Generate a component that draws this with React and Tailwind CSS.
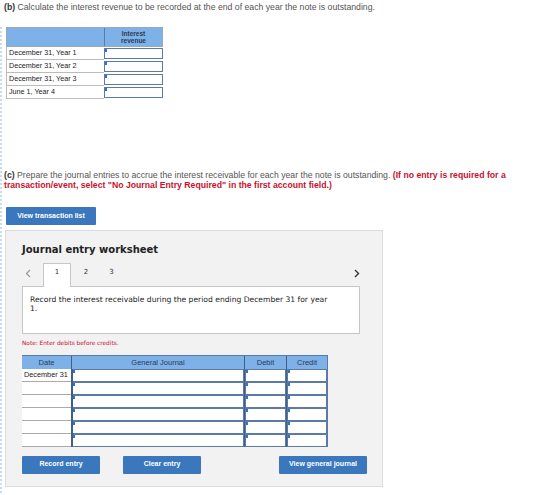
import React from 'react';

const sans = { fontFamily: '"Liberation Sans", Arial, sans-serif' };
const verdana = { fontFamily: '"DejaVu Sans", Verdana, sans-serif' };

const Cell = ({ className = '' }) => (
  <div className={`relative bg-white border border-[#5b7ba6] ${className}`}>
    <span className="absolute left-0 top-0 w-[2px] h-[3px] bg-[#2f6fd6]" />
  </div>
);

const Btn = ({ children, className = '' }) => (
  <button className={`h-[18px] bg-[#3a77bd] text-white text-[7px] font-bold rounded-[1px] ${className}`} style={sans}>
    {children}
  </button>
);

const interestRows = ['December 31, Year 1', 'December 31, Year 2', 'December 31, Year 3', 'June 1, Year 4'];

export default function App() {
  return (
    <div className="w-[560px] h-[495px] bg-white overflow-hidden" style={sans}>
      <p className="pl-[4px] pt-[3px] h-[12px] text-[8.7px] leading-[9px] text-[#555] whitespace-nowrap">
        <span className="font-bold text-[#333]">(b)</span> Calculate the interest revenue to be recorded at the end of each year the note is outstanding.
      </p>
      <div className="h-[482px] border-l-2 border-b-2 border-dotted border-[#c9dbf0] pl-[4px]">
        {/* interest table */}
        <div className="mt-[15px] w-[157px]">
          <div className="flex h-[20px] bg-[#7eb1e8] border border-[#9ab]">
            <div className="w-[97px]" />
            <div className="flex-1 border-l border-[#5b7ba6] text-center text-[6.5px] leading-[7px] text-[#2a3a55] font-bold pt-[2px]">
              Interest<br />revenue
            </div>
          </div>
          {interestRows.map((r) => (
            <div key={r} className="flex h-[13px]">
              <div className="w-[98px] border-l border-b border-[#bbb] text-[7.2px] leading-[12px] pl-[2px] text-[#222] whitespace-nowrap">{r}</div>
              <Cell className="flex-1 my-[1px]" />
            </div>
          ))}
        </div>

        {/* part c */}
        <div className="mt-[71px] -ml-[2px] text-[8.7px] leading-[10px] whitespace-nowrap">
          <div className="text-[#555]">
            <span className="font-bold text-[#333]">(c)</span> Prepare the journal entries to accrue the interest receivable for each year the note is outstanding.{' '}
            <span className="font-bold text-[#c8102e]">(If no entry is required for a</span>
          </div>
          <div className="font-bold text-[#c8102e]">transaction/event, select "No Journal Entry Required" in the first account field.)</div>
        </div>
        <Btn className="mt-[17px] w-[90px]">View transaction list</Btn>

        {/* worksheet */}
        <div className="mt-[5px] -ml-[1px] w-[378px] h-[257px] bg-[#f2f2f2] border border-[#dcdcdc] pl-[16px] pr-[22px]">
          <h2 className="mt-[12px] text-[10px] leading-[13px] font-bold text-[#222]" style={verdana}>Journal entry worksheet</h2>
          <div className="mt-[6px] flex items-end h-[24px] text-[7px] text-[#333]" style={verdana}>
            <span className="w-[21px] pl-[3px] pb-[8px]">
              <svg width="6" height="9" viewBox="0 0 6 9"><path d="M5 1 L1.5 4.5 L5 8" fill="none" stroke="#999" strokeWidth="1.2" /></svg>
            </span>
            <span className="w-[28px] h-[24px] bg-white border border-b-0 border-[#c6c6c6] text-center leading-[16px] -mb-px relative z-10">1</span>
            <span className="w-[30px] text-center leading-[16px] pb-[6px]">2</span>
            <span className="w-[25px] text-center leading-[16px] pb-[6px] -ml-[2px]">3</span>
            <span className="ml-auto pb-[8px]">
              <svg width="6" height="9" viewBox="0 0 6 9"><path d="M1 1 L4.5 4.5 L1 8" fill="none" stroke="#333" strokeWidth="1.4" /></svg>
            </span>
          </div>
          <div className="w-[338px] h-[48px] bg-white border border-[#c6c6c6] pl-[7px] pr-[30px] pt-[8px] text-[7.6px] leading-[9px] text-[#222]" style={verdana}>
            Record the interest receivable during the period ending December 31 for year 1.
          </div>
          <p className="mt-[5px] text-[5.8px] text-[#c8102e]" style={verdana}>Note: Enter debits before credits.</p>

          {/* journal table */}
          <div className="mt-[7px] w-[306px]">
            <div className="flex h-[14px] bg-[#7eb1e8] border-t border-r border-[#5b7ba6] text-[7.5px] leading-[14px] text-[#2a3a55] text-center">
              <div className="w-[49px]">Date</div>
              <div className="w-[173px] border-l border-[#3f5f86]">General Journal</div>
              <div className="w-[42px] border-l border-[#3f5f86]">Debit</div>
              <div className="flex-1 border-l border-[#3f5f86]">Credit</div>
            </div>
            {[0, 1, 2, 3, 4, 5].map((i) => (
              <div key={i} className="flex h-[13px] border-r border-[#5b7ba6]">
                <div className="w-[49px] bg-white border-b border-[#aaa] text-[7.3px] leading-[12px] pl-[2px] text-[#222] whitespace-nowrap">
                  {i === 0 ? 'December 31' : ''}
                </div>
                <div className="w-[173px] border-l-2 border-[#3f5f86] bg-[#5b7ba6] py-[1px] pr-[1px]"><Cell className="h-full border-0" /></div>
                <div className="w-[42px] border-l border-[#3f5f86] bg-[#5b7ba6] p-[1px]"><Cell className="h-full border-0" /></div>
                <div className="flex-1 border-l border-[#3f5f86] bg-[#5b7ba6] p-[1px]"><Cell className="h-full border-0" /></div>
              </div>
            ))}
          </div>

          <div className="mt-[9px] flex w-[345px]">
            <Btn className="w-[78px]">Record entry</Btn>
            <Btn className="w-[78px] ml-[23px]">Clear entry</Btn>
            <Btn className="w-[88px] ml-auto">View general journal</Btn>
          </div>
        </div>
      </div>
    </div>
  );
}
